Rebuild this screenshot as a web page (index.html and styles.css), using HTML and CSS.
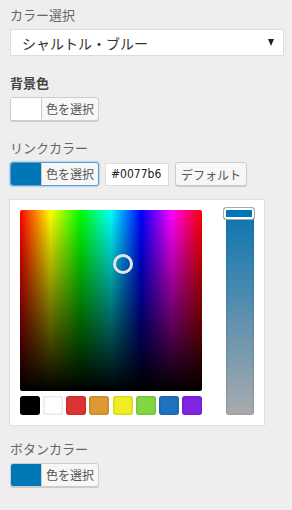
FILE: index.html
```html
<!DOCTYPE html>
<html lang="ja">
<head>
    <meta charset="UTF-8">
    <meta name="viewport" content="width=device-width, initial-scale=1.0">
    <title>カラー設定</title>
    <link rel="stylesheet" href="styles.css">
</head>
<body>
    <div class="panel">
        <div class="control">
            <span class="label">カラー選択</span>
            <div class="select">
                <span>シャルトル・ブルー</span>
                <span class="arrow"></span>
            </div>
        </div>

        <div class="control">
            <span class="label bold">背景色</span>
            <button class="color-btn"><span class="swatch white"></span><span class="btn-text">色を選択</span></button>
        </div>

        <div class="control with-picker">
            <span class="label">リンクカラー</span>
            <div class="row">
                <button class="color-btn focused"><span class="swatch blue"></span><span class="btn-text">色を選択</span></button>
                <input class="hex" type="text" value="#0077b6">
                <button class="default-btn">デフォルト</button>
            </div>
            <div class="picker">
                <div class="picker-main">
                    <div class="square">
                        <span class="circle"></span>
                    </div>
                    <div class="palette">
                        <span class="chip" style="background:#000"></span>
                        <span class="chip" style="background:#fff"></span>
                        <span class="chip" style="background:#dd3333"></span>
                        <span class="chip" style="background:#dd9933"></span>
                        <span class="chip" style="background:#eeee22"></span>
                        <span class="chip" style="background:#81d742"></span>
                        <span class="chip" style="background:#1e73be"></span>
                        <span class="chip" style="background:#8224e3"></span>
                    </div>
                </div>
                <div class="slider">
                    <span class="handle"></span>
                </div>
            </div>
        </div>

        <div class="control">
            <span class="label">ボタンカラー</span>
            <button class="color-btn"><span class="swatch blue"></span><span class="btn-text">色を選択</span></button>
        </div>
    </div>
</body>
</html>
```

FILE: styles.css
```css
body {
    margin: 0;
    background-color: #eeeeee;
    font-family: "Noto Sans CJK JP", "Noto Sans", sans-serif;
    color: #555d66;
}
.panel {
    padding: 5px 8px 0 10px;
}
.control {
    margin-bottom: 17px;
}
.control.with-picker {
    margin-bottom: 13px;
}
.label {
    display: block;
    font-size: 13px;
    line-height: 20px;
    margin-bottom: 4px;
    color: #666;
}
.label.bold {
    font-weight: bold;
    color: #444;
}
.select {
    display: flex;
    justify-content: space-between;
    align-items: center;
    height: 27px;
    box-sizing: border-box;
    background: #fff;
    border: 1px solid #dddddd;
    padding: 0 9px 0 11px;
    font-size: 14px;
    color: #333;
}
.arrow {
    width: 0;
    height: 0;
    border-left: 3.5px solid transparent;
    border-right: 3.5px solid transparent;
    border-top: 7px solid #222;
}
.row {
    display: flex;
    align-items: center;
    gap: 6px;
}
.color-btn {
    display: flex;
    height: 24px;
    padding: 0;
    border: 1px solid #cccccc;
    border-radius: 3px;
    box-shadow: 0 1px 0 #cccccc;
    background: #f7f7f7;
    overflow: hidden;
    font-family: inherit;
    cursor: pointer;
}
.color-btn.focused {
    border-color: #5b9dd9;
    box-shadow: 0 0 2px rgba(30, 140, 190, 0.8);
}
.swatch {
    width: 30px;
    height: 100%;
    border-right: 1px solid #cccccc;
}
.swatch.white {
    background: #fff;
}
.swatch.blue {
    background: #0077b6;
}
.btn-text {
    padding: 0 4px;
    font-size: 12px;
    line-height: 22px;
    color: #555;
}
.hex {
    width: 64px;
    height: 23px;
    box-sizing: border-box;
    border: 1px solid #dddddd;
    background: #fff;
    padding: 0 5px;
    font-family: "Liberation Sans Narrow", "DejaVu Sans Condensed", sans-serif;
    font-size: 12px;
    color: #222;
}
.default-btn {
    height: 24px;
    padding: 0 5px;
    border: 1px solid #cccccc;
    border-radius: 3px;
    box-shadow: 0 1px 0 #cccccc;
    background: #f7f7f7;
    font-family: inherit;
    font-size: 12px;
    color: #555;
}
.picker {
    display: flex;
    gap: 24px;
    margin-top: 13px;
    margin-left: -1px;
    width: 256px;
    box-sizing: border-box;
    padding: 10px 10px 10px 10px;
    background: #fff;
    border: 1px solid #dfdfdf;
}
.picker-main {
    width: 182px;
}
.square {
    position: relative;
    height: 181px;
    border-radius: 2px;
    background:
        linear-gradient(to bottom, rgba(0, 0, 0, 0), #000),
        linear-gradient(to right, #f00, #ff0, #0f0, #0ff, #00f, #f0f, #f00);
}
.circle {
    position: absolute;
    left: 93px;
    top: 44px;
    width: 14px;
    height: 14px;
    border: 3px solid #e4e4e4;
    border-radius: 50%;
}
.palette {
    display: flex;
    justify-content: space-between;
    margin-top: 5px;
}
.chip {
    width: 20px;
    height: 19px;
    border-radius: 3px;
    box-shadow: inset 0 0 3px rgba(0, 0, 0, 0.25);
}
.slider {
    position: relative;
    width: 28px;
    height: 205px;
    border-radius: 3px;
    background: linear-gradient(to bottom, #0a74b0, #a9abad);
    box-shadow: inset 0 0 3px rgba(0, 0, 0, 0.2);
}
.handle {
    position: absolute;
    left: -3px;
    top: -3px;
    width: 30px;
    height: 11px;
    border: 1px solid #aaa;
    border-radius: 3px;
    box-shadow: inset 0 0 0 2px #fff;
    background: #0077b6;
}
```
